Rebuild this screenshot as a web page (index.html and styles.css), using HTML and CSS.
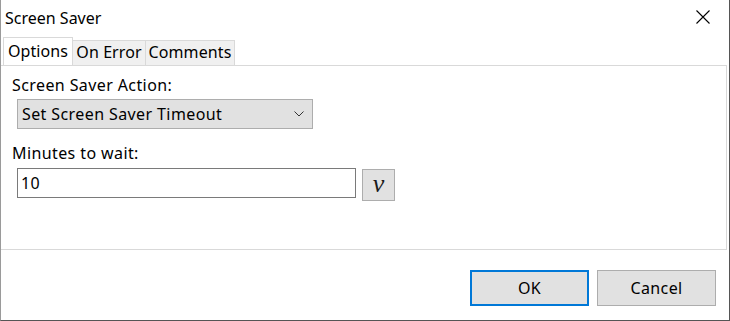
FILE: index.html
```html
<!DOCTYPE html>
<html>
<head>
    <meta charset="utf-8">
    <title>Screen Saver</title>
    <link rel="stylesheet" href="styles.css">
</head>
<body>
    <div class="window">
        <div class="titlebar">
            <span class="title">Screen Saver</span>
            <svg class="close" width="14" height="14" viewBox="0 0 14 14">
                <path d="M0.5 0.5 L13.5 13.5 M13.5 0.5 L0.5 13.5" stroke="#000" stroke-width="1.1" fill="none"/>
            </svg>
        </div>
        <div class="tabs">
            <div class="tab selected">Options</div>
            <div class="tab error">On Error</div>
            <div class="tab comments">Comments</div>
        </div>
        <div class="panel">
            <div class="label">Screen Saver Action:</div>
            <div class="select">
                <span>Set Screen Saver Timeout</span>
                <svg class="chevron" width="10" height="6" viewBox="0 0 10 6">
                    <path d="M0.5 0.5 L5 5 L9.5 0.5" stroke="#333" stroke-width="1" fill="none"/>
                </svg>
            </div>
            <div class="label second">Minutes to wait:</div>
            <div class="row">
                <div class="input">10</div>
                <div class="varbtn">v</div>
            </div>
        </div>
        <div class="buttons">
            <div class="button default">OK</div>
            <div class="button">Cancel</div>
        </div>
    </div>
</body>
</html>
```

FILE: styles.css
```css
*
{
    box-sizing: border-box;
}
body
{
    margin: 0;
    background: #fff;
    font-family: "Noto Sans", "Open Sans", sans-serif;
    font-size: 16px;
    letter-spacing: 0.4px;
    color: #000;
}
.window
{
    width: 730px;
    height: 321px;
    border-left: 1px solid #9a9a9a;
    border-right: 1px solid #555;
    border-bottom: 1px solid #555;
    background: #fff;
    display: flex;
    flex-direction: column;
}
.titlebar
{
    height: 37px;
    display: flex;
    align-items: flex-start;
    justify-content: space-between;
    padding: 7px 19px 0 4px;
}
.title
{
    line-height: 22px;
    letter-spacing: 0;
}
.close
{
    margin-top: 3px;
}
.tabs
{
    display: flex;
    align-items: flex-end;
    height: 28px;
    padding-left: 2px;
}
.tab
{
    height: 25px;
    padding: 0 2px;
    line-height: 23px;
    background: #f0f0f0;
    border: 1px solid #d9d9d9;
    border-bottom: none;
    border-left: none;
    text-align: center;
    white-space: nowrap;
    letter-spacing: 0.1px;
}
.tab.selected
{
    width: 70px;
    height: 28px;
    background: #fff;
    border-left: 1px solid #d9d9d9;
    line-height: 27px;
}
.tab.error
{
    width: 73px;
}
.tab.comments
{
    width: 89px;
}
.panel
{
    height: 185px;
    margin-right: 2px;
    border: 1px solid #d9d9d9;
    border-left: none;
    padding: 9px 0 0 11px;
}
.label
{
    line-height: 20px;
}
.label.second
{
    margin-top: 14px;
}
.select
{
    margin: 4px 0 0 5px;
    width: 296px;
    height: 30px;
    background: #e1e1e1;
    border: 1px solid #adadad;
    display: flex;
    align-items: center;
    justify-content: space-between;
    padding: 0 8px 0 4px;
}
.row
{
    display: flex;
    align-items: flex-start;
    margin: 5px 0 0 5px;
}
.input
{
    width: 339px;
    height: 30px;
    border: 1px solid #7a7a7a;
    padding: 0 3px;
    line-height: 28px;
}
.varbtn
{
    margin: 1px 0 0 6px;
    width: 33px;
    height: 32px;
    background: #e1e1e1;
    border: 1px solid #adadad;
    font-family: "Liberation Serif", serif;
    font-style: italic;
    font-size: 26px;
    line-height: 28px;
    letter-spacing: 0;
    color: #1a1a1a;
    text-align: center;
}
.buttons
{
    display: flex;
    justify-content: flex-end;
    gap: 8px;
    padding: 20px 13px 0 0;
}
.button
{
    width: 119px;
    height: 36px;
    background: #e1e1e1;
    border: 1px solid #adadad;
    display: flex;
    align-items: center;
    justify-content: center;
}
.button.default
{
    border: 2px solid #0078d7;
}
```
